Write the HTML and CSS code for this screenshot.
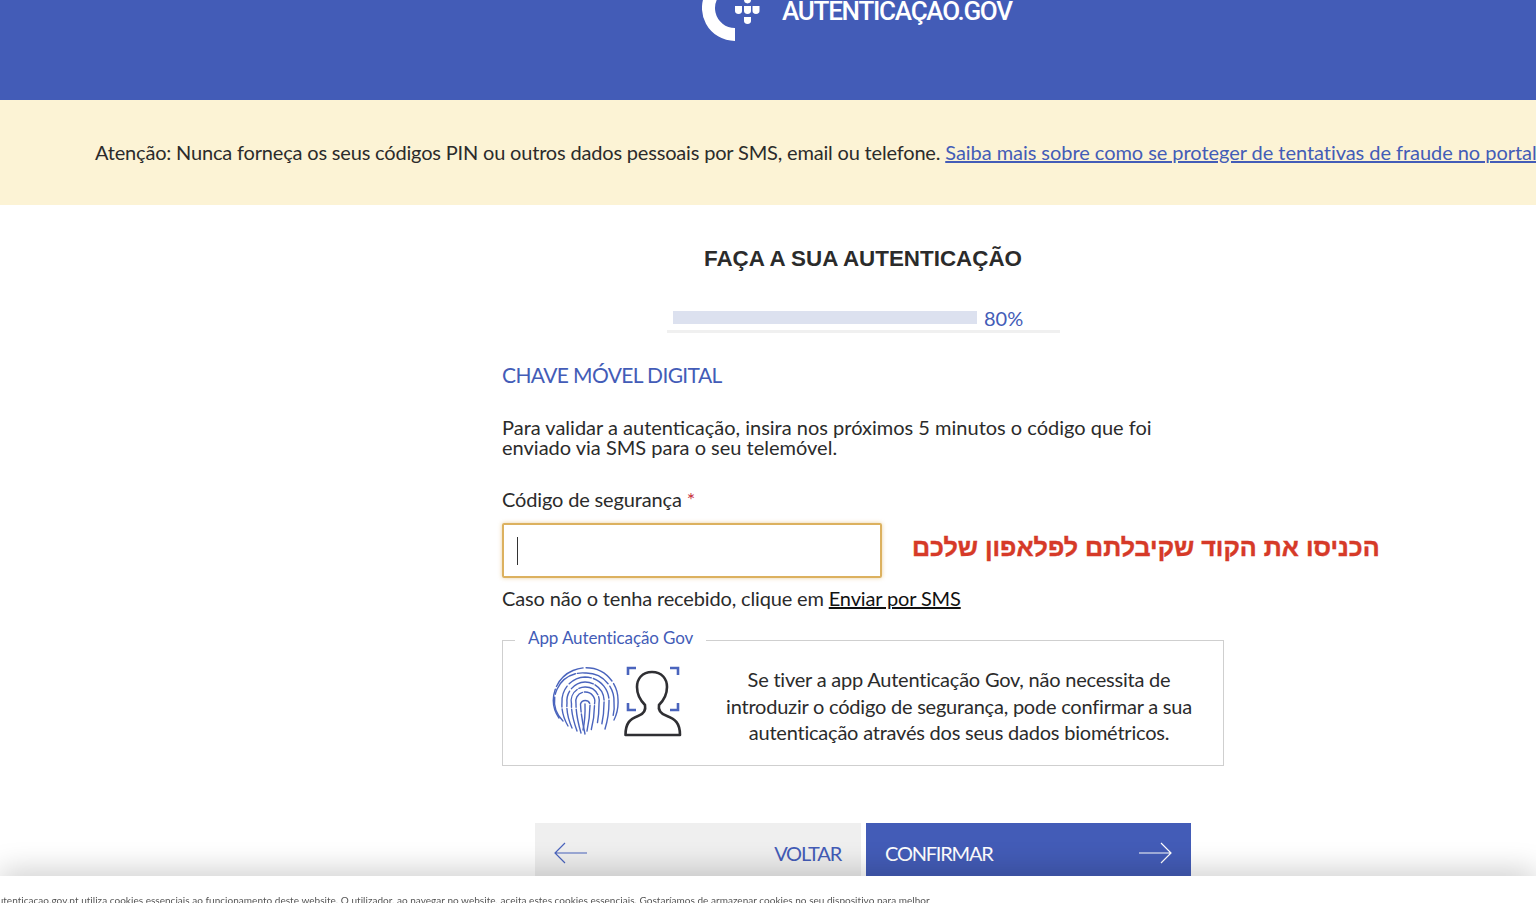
FILE: index.html
```html
<!DOCTYPE html>
<html lang="pt">
<head>
    <meta charset="UTF-8">
    <meta name="viewport" content="width=device-width, initial-scale=1.0">
    <title>Autenticação.gov</title>
    <link rel="stylesheet" href="styles.css">
</head>
<body>
    <header class="top-bar">
        <div class="brand">
            <svg class="brand-logo" width="62" height="42" viewBox="0 0 62 42" fill="#fff">
                <path d="M33 41 A33 33 0 0 1 5.3 -10 L24.3 -10 A20 20 0 0 0 33 28 Z"/>
                <path d="M42 -5 H49 V0 Q49 3 45.5 3.5 Q42 3 42 0 Z"/>
                <path d="M33 6 H40 V11 Q40 13.5 36.5 14 Q33 13.5 33 11 Z"/>
                <path d="M42 6 H49 V11 Q49 13.5 45.5 14 Q42 13.5 42 11 Z"/>
                <path d="M50.5 6 H57.5 V11 Q57.5 13.5 54 14 Q50.5 13.5 50.5 11 Z"/>
                <path d="M42 17 H49 V21 Q49 23.5 45.5 24 Q42 23.5 42 21 Z"/>
            </svg>
            <span class="brand-name">AUTENTICAÇÃO.GOV</span>
        </div>
    </header>

    <div class="notice">
        Atenção: Nunca forneça os seus códigos PIN ou outros dados pessoais por SMS, email ou telefone.
        <a href="#">Saiba mais sobre como se proteger de tentativas de fraude no portal</a>
    </div>

    <main class="content">
        <h1>FAÇA A SUA AUTENTICAÇÃO</h1>

        <div class="progress">
            <div class="progress-bar"></div>
            <span class="progress-value">80%</span>
        </div>

        <h2>CHAVE MÓVEL DIGITAL</h2>

        <p class="intro">Para validar a autenticação, insira nos próximos 5 minutos o código que foi enviado via SMS para o seu telemóvel.</p>

        <label class="field-label" for="code">Código de segurança <span class="required">*</span></label>
        <div class="field-row">
            <div class="code-input" id="code"><span class="caret"></span></div>
            <span class="hint" dir="rtl" lang="he">הכניסו את הקוד שקיבלתם לפלאפון שלכם</span>
        </div>
        <p class="resend">Caso não o tenha recebido, clique em <a href="#">Enviar por SMS</a></p>

        <fieldset class="app-box">
            <legend>App Autenticação Gov</legend>
            <div class="app-icons">
                <svg class="fingerprint" width="68" height="70" viewBox="0 0 68 70" fill="none" stroke="#4a64bd" stroke-width="1.4" stroke-linecap="round">
                    <path d="M7 52 A32 32 0 0 1 21 4.5 A32 32 0 0 1 66 34 A40 40 0 0 1 62 54" stroke-dasharray="30 3 34 3 30 3 44 3"/>
                    <path d="M11 55 A28 28 0 0 1 33 7 A28 28 0 0 1 62 36 A40 40 0 0 1 57 60" stroke-dasharray="26 3 30 2 34 3 30"/>
                    <path d="M16 60 Q9 48 10 36 A24 24 0 0 1 33 11 A24 24 0 0 1 57 36 Q57 50 53 63" stroke-dasharray="18 2 22 3 24 2 26 2 30"/>
                    <path d="M20 62 Q14 48 15 37 A19 19 0 0 1 33 16 A19 19 0 0 1 52 37 Q52 52 48 65" stroke-dasharray="20 2 16 3 24 2 18 2 22"/>
                    <path d="M25 65 Q19 48 19.5 38 A14 14 0 0 1 33 21 A14 14 0 0 1 47 38 Q47 54 43 67" stroke-dasharray="22 2 20 2 22 2 26"/>
                    <path d="M29 67 Q24 50 24 38 A9.5 9.5 0 0 1 33 26 A9.5 9.5 0 0 1 42.5 38 Q42.5 54 38 68" stroke-dasharray="24 2 18 2 18 2 24"/>
                    <path d="M33 68 Q29 50 28.5 38 A5 5 0 0 1 38 38 Q38 54 34 69" stroke-dasharray="20 2 20 2 26"/>
                    <path d="M33 38 Q33.5 52 31 64"/>
                </svg>
                <svg class="face-scan" width="58" height="72" viewBox="0 0 58 72" fill="none">
                    <g stroke="#4a64bd" stroke-width="2.6">
                        <path d="M4 10 V3 H12"/>
                        <path d="M46 3 H54 V10"/>
                        <path d="M4 38 V45 H12"/>
                        <path d="M46 45 H54 V38"/>
                    </g>
                    <path d="M28 7 C18 7 13 14 13 22 C13 30 17 36 21 40 C22 45 20 49 14 51 C6 54 1.5 58 1.5 70 H56 C56 58 51 54 43 51 C37 49 34 45 35 40 C39 36 43 30 43 22 C43 14 38 7 28 7 Z" stroke="#2f2f33" stroke-width="2.6" stroke-linejoin="round"/>
                </svg>
            </div>
            <p class="app-text">Se tiver a app Autenticação Gov, não necessita de introduzir o código de segurança, pode confirmar a sua autenticação através dos seus dados biométricos.</p>
        </fieldset>

        <div class="actions">
            <a class="btn btn-back" href="#">
                <svg width="34" height="22" viewBox="0 0 34 22" fill="none" stroke="#4a64bd" stroke-width="1.2"><path d="M33 11 H1 M11 1 L1 11 L11 21"/></svg>
                <span>VOLTAR</span>
            </a>
            <a class="btn btn-confirm" href="#">
                <span>CONFIRMAR</span>
                <svg width="34" height="22" viewBox="0 0 34 22" fill="none" stroke="#fff" stroke-width="1.2"><path d="M1 11 H33 M23 1 L33 11 L23 21"/></svg>
            </a>
        </div>
    </main>

    <div class="cookie-bar">
        <p>O autenticacao.gov.pt utiliza cookies essenciais ao funcionamento deste website. O utilizador, ao navegar no website, aceita estes cookies essenciais. Gostaríamos de armazenar cookies no seu dispositivo para melhor</p>
    </div>
</body>
</html>
```

FILE: styles.css
```css
body {
    margin: 0;
    height: 903px;
    overflow: hidden;
    background-color: #fff;
    color: #2b2b2b;
    font-family: Lato, "Noto Sans", sans-serif;
    font-size: 20px;
}
.top-bar {
    height: 100px;
    background-color: #435cb7;
    overflow: hidden;
}
.brand {
    display: flex;
    align-items: flex-start;
    padding-left: 702px;
}
.brand-logo {
    flex: none;
}
.brand-name {
    margin: -7px 0 0 18px;
    font-family: Roboto, sans-serif;
    font-size: 26px;
    font-weight: 500;
    line-height: 36px;
    letter-spacing: -1.25px;
    color: #fff;
}
.notice {
    height: 105px;
    padding-left: 95px;
    background-color: #fcf3d5;
    line-height: 104px;
    letter-spacing: -0.18px;
    white-space: nowrap;
    overflow: hidden;
}
.notice a {
    color: #435cb7;
    letter-spacing: -0.05px;
}
.content {
    width: 722px;
    margin-left: 502px;
}
h1 {
    margin: 39px 0 0;
    font-family: "Liberation Sans", Arial, sans-serif;
    font-size: 22.4px;
    font-weight: bold;
    line-height: 29px;
    text-align: center;
    color: #2b2b2b;
}
.progress {
    display: flex;
    align-items: flex-end;
    width: 393px;
    height: 26px;
    margin: 34px 0 0 165px;
    padding-left: 6px;
    box-sizing: border-box;
    border-bottom: 3px solid #f0f0f0;
    color: #435cb7;
}
.progress-bar {
    width: 304px;
    height: 13px;
    margin-bottom: 6px;
    background-color: #dce1ef;
}
.progress-value {
    margin-left: 7px;
    line-height: 20px;
    margin-bottom: 2px;
}
h2 {
    margin: 28px 0 0;
    font-size: 21px;
    font-weight: normal;
    line-height: 28px;
    letter-spacing: -0.63px;
    color: #435cb7;
}
.intro {
    width: 670px;
    margin: 28px 0 0;
    line-height: 20px;
}
.field-label {
    display: block;
    margin-top: 30px;
    line-height: 24px;
    letter-spacing: -0.15px;
}
.required {
    color: #c8323c;
}
.field-row {
    display: flex;
    align-items: center;
    margin-top: 12px;
}
.code-input {
    display: flex;
    align-items: center;
    width: 363px;
    height: 51px;
    padding-left: 13px;
    border: 2px solid #dcb15f;
    border-radius: 2px;
    box-shadow: 0 0 4px rgba(220, 177, 95, 0.6);
    flex: none;
}
.caret {
    width: 1px;
    height: 28px;
    background-color: #333;
}
.hint {
    margin: 0 0 6px 30px;
    font-family: "Liberation Sans", Arial, sans-serif;
    font-size: 25.1px;
    font-weight: bold;
    -webkit-text-stroke: 0.4px #d63a28;
    color: #d63a28;
    white-space: nowrap;
}
.resend {
    margin: 8px 0 0;
    line-height: 24px;
    letter-spacing: -0.15px;
}
.resend a {
    color: #111;
}
.app-box {
    display: flex;
    align-items: center;
    width: 722px;
    height: 139px;
    margin: 17px 0 0;
    padding: 0;
    box-sizing: border-box;
    border: 1px solid #cfcfcf;
}
.app-box legend {
    margin-left: 12px;
    padding: 0 13px 6px;
    font-size: 17px;
    letter-spacing: -0.1px;
    color: #435cb7;
}
.app-icons {
    display: flex;
    align-items: center;
    gap: 4px;
    flex: none;
    padding-left: 49px;
    margin-bottom: 18px;
}
.app-text {
    width: 480px;
    margin: 0 0 7px 37px;
    text-align: center;
    line-height: 26.5px;
    letter-spacing: -0.22px;
}
.actions {
    display: flex;
    gap: 5px;
    margin: 57px 0 0 33px;
}
.btn {
    display: flex;
    align-items: center;
    justify-content: space-between;
    width: 326px;
    height: 60px;
    box-sizing: border-box;
    padding: 0 19px;
    text-decoration: none;
    font-size: 20px;
    letter-spacing: -1.2px;
}
.btn-back {
    padding-right: 20px;
    background-color: #efefef;
    color: #435cb7;
}
.btn-confirm {
    width: 325px;
    background-color: #435cb7;
    color: #fff;
}
.cookie-bar {
    position: fixed;
    left: 0;
    right: 0;
    bottom: 0;
    height: 27px;
    background-color: #fff;
    box-shadow: 0 -4px 30px rgba(0, 0, 0, 0.22);
    overflow: hidden;
}
.cookie-bar p {
    margin: 16px 0 0 -18px;
    font-size: 10px;
    line-height: 16px;
    letter-spacing: 0.03px;
    color: #555;
    white-space: nowrap;
}
```
